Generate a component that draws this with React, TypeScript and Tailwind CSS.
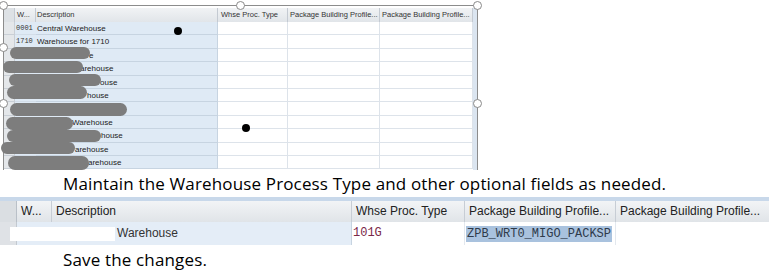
import React from "react";

const topRows: { w: string; d: string; pl: number }[] = [
  { w: "0001", d: "Central Warehouse", pl: 1 },
  { w: "1710", d: "Warehouse for 1710", pl: 1 },
  { w: "", d: "e", pl: 53 },
  { w: "", d: "arehouse", pl: 44 },
  { w: "", d: "ouse", pl: 64 },
  { w: "", d: "house", pl: 51 },
  { w: "", d: "", pl: 1 },
  { w: "", d: "Warehouse", pl: 36 },
  { w: "", d: "house", pl: 65 },
  { w: "", d: "arehouse", pl: 39 },
  { w: "", d: "arehouse", pl: 52 },
];

const blobs: { x: number; y: number; w: number; h: number }[] = [
  { x: 10, y: 47, w: 80, h: 12 },
  { x: 3, y: 61, w: 80, h: 12 },
  { x: 9, y: 74, w: 92, h: 12 },
  { x: 7, y: 86, w: 80, h: 13 },
  { x: 10, y: 103, w: 117, h: 13 },
  { x: 6, y: 117, w: 67, h: 13 },
  { x: 7, y: 130, w: 94, h: 12 },
  { x: 1, y: 142, w: 74, h: 12 },
  { x: 8, y: 156, w: 81, h: 14 },
];

const handles: { x: number; y: number }[] = [
  { x: 3, y: 5 },
  { x: 240, y: 5 },
  { x: 477, y: 5 },
  { x: 3, y: 47 },
  { x: 3, y: 103 },
  { x: 477, y: 103 },
];

function TopTable() {
  const hcell = "overflow-hidden whitespace-nowrap border-r border-[#c4cad2]";
  return (
    <div className="relative flex h-[170px] w-[480px] flex-col pl-[3px] pt-[5px]">
      <div className="flex h-[165px] w-[475px] border-l border-r border-t border-[#8c8c8c] pt-[2px]">
        <div className="flex w-[469px] flex-col">
          {/* header */}
          <div className="flex h-[14px] bg-gradient-to-b from-[#f1f3f5] to-[#e1e5e9] text-[7.5px] leading-[14px] text-[#333]">
            <div className="w-[11px] border-r border-[#c4cad2] bg-[#dde1e5]" />
            <div className={`w-[21px] pl-[2px] ${hcell}`}>W...</div>
            <div className={`w-[182px] pl-[1px] ${hcell}`}>Description</div>
            <div className={`w-[70px] pl-[3px] ${hcell}`}>Whse Proc. Type</div>
            <div className={`w-[92px] pl-[2px] ${hcell}`}>Package Building Profile...</div>
            <div className={`w-[93px] pl-[2px] ${hcell}`}>Package Building Profile...</div>
          </div>
          {topRows.map((r, i) => (
            <div key={i} className="flex h-[13.4px] whitespace-nowrap text-[8px] leading-[13px] text-[#222]">
              <div className="w-[11px] border-b border-r border-[#c9cfd6] bg-[#e4e7ea]" />
              <div className="w-[21px] border-b border-[#d3dde8] bg-[#dfeaf5] pl-[1px] font-['Liberation_Mono',monospace] text-[7px] text-[#333]">
                {r.w}
              </div>
              <div
                className="w-[182px] border-b border-r border-[#c7d4e1] bg-[#dfeaf5]"
                style={{ paddingLeft: r.pl }}
              >
                {r.d}
              </div>
              <div className="w-[70px] border-b border-r border-[#dde3ea] bg-white" />
              <div className="w-[92px] border-b border-r border-[#dde3ea] bg-white" />
              <div className="w-[93px] border-b border-r border-[#dde3ea] bg-white" />
            </div>
          ))}
        </div>
        <div className="w-[4px] bg-[#dbe5f0]" />
      </div>

      {blobs.map((b, i) => (
        <div
          key={i}
          className="absolute rounded-full bg-[#7d7d7d]"
          style={{ left: b.x, top: b.y, width: b.w, height: b.h }}
        />
      ))}

      <div className="absolute left-[174px] top-[27px] h-[8px] w-[8px] rounded-full bg-black" />
      <div className="absolute left-[242px] top-[124px] h-[8px] w-[8px] rounded-full bg-black" />

      {handles.map((h, i) => (
        <div
          key={i}
          className="absolute h-[9px] w-[9px] rounded-full border-[1.5px] border-[#8a8a8a] bg-white"
          style={{ left: h.x - 4.5, top: h.y - 4.5 }}
        />
      ))}
    </div>
  );
}

function BottomTable() {
  const cell = "whitespace-nowrap border-r border-[#c7cdd5] pl-[4px]";
  return (
    <div className="flex flex-col">
      <div className="h-[4px] bg-[#c8d8ea]" />
      <div className="flex h-[21px] bg-gradient-to-b from-[#f2f4f6] to-[#e0e4e8] text-[12px] leading-[21px] text-[#222]">
        <div className="w-[17px] border-r border-[#b9c0c8] bg-[#dadee2]" />
        <div className={`w-[35px] ${cell}`}>W...</div>
        <div className={`w-[300px] ${cell}`}>Description</div>
        <div className={`w-[113px] ${cell}`}>Whse Proc. Type</div>
        <div className={`w-[151px] ${cell}`}>Package Building Profile...</div>
        <div className="flex-1 whitespace-nowrap pl-[4px]">Package Building Profile...</div>
      </div>
      <div className="flex h-[23px] text-[12px] leading-[23px]">
        <div className="w-[17px] border-r border-[#c3c9d0] bg-[#dfe2e6]" />
        <div className="relative flex w-[335px] items-center border-r border-[#c7d4e1] bg-[#e4edf7] pl-[100px] text-[#333]">
          <div className="absolute left-[-7px] top-[5px] h-[14px] w-[105px] bg-white" />
          <span className="relative">Warehouse</span>
        </div>
        <div className="w-[113px] border-r border-[#e3e8ee] pl-[1px] font-['Liberation_Mono',monospace] text-[12px] text-[#7a2848]">
          101G
        </div>
        <div className="flex w-[151px] items-center border-r border-[#e3e8ee] pl-[1px]">
          <span className="bg-[#a9c2de] px-[1px] font-['Liberation_Mono',monospace] text-[12px] leading-[16px] text-[#2e3a4a]">
            ZPB_WRT0_MIGO_PACKSP
          </span>
        </div>
        <div className="flex-1" />
      </div>
    </div>
  );
}

export default function App() {
  return (
    <div className="relative h-[274px] w-[769px] overflow-hidden bg-white font-['Liberation_Sans',sans-serif]">
      <TopTable />
      <div className="flex h-[27px] items-center whitespace-nowrap pl-[63px] font-['Open_Sans',sans-serif] text-[17px] tracking-[0.15px] text-black">
        Maintain the Warehouse Process Type and other optional fields as needed.
      </div>
      <BottomTable />
      <div className="flex h-[29px] items-center pl-[63px] font-['Open_Sans',sans-serif] text-[17px] tracking-[0.15px] text-black">
        Save the changes.
      </div>
    </div>
  );
}
